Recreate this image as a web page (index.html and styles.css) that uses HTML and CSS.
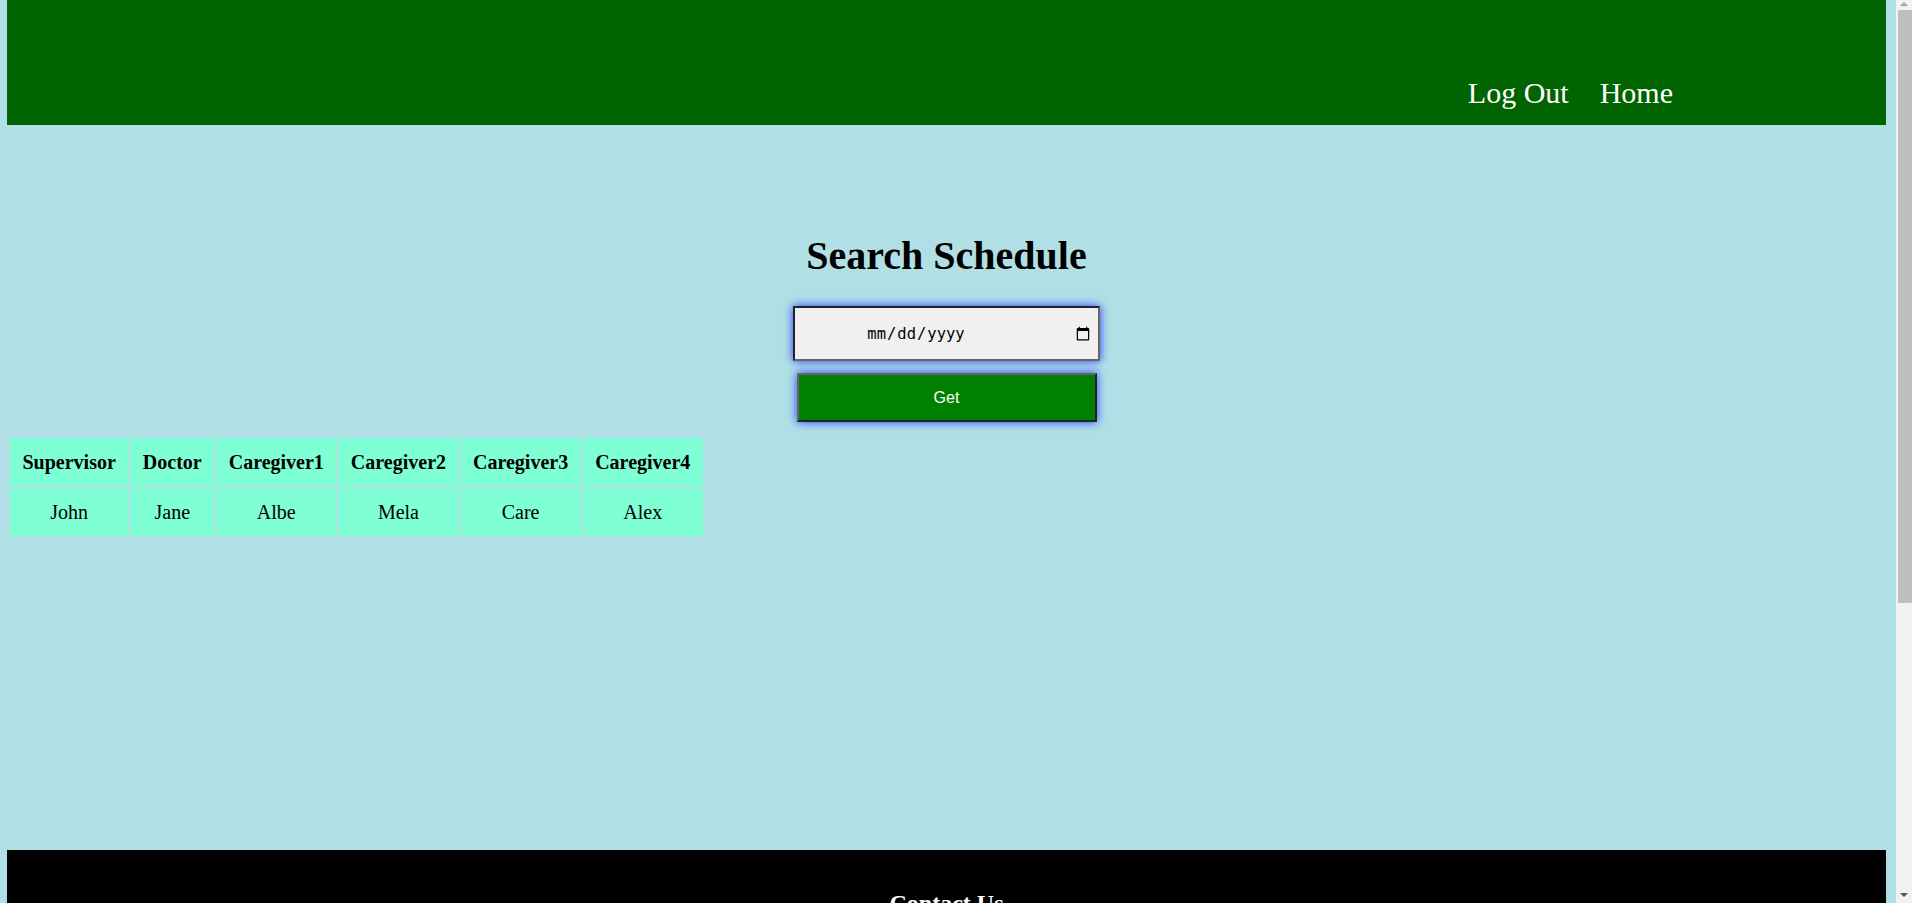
FILE: index.html
```html
<!DOCTYPE html>
<html lang="en">
<head>
<meta charset="utf-8">
<title>Search Schedule</title>
<link rel="stylesheet" href="styles.css">
</head>
<body>
<header class="site-header">
  <nav class="nav">
    <a class="nav-link" href="#">Log Out</a>
    <a class="nav-link" href="#">Home</a>
  </nav>
</header>
<main class="main">
  <h1 class="title">Search Schedule</h1>
  <form class="search-form">
    <input class="date-input" type="date">
    <button class="get-btn" type="button">Get</button>
  </form>
  <table class="schedule">
    <thead>
      <tr>
        <th>Supervisor</th>
        <th>Doctor</th>
        <th>Caregiver1</th>
        <th>Caregiver2</th>
        <th>Caregiver3</th>
        <th>Caregiver4</th>
      </tr>
    </thead>
    <tbody>
      <tr>
        <td>John</td>
        <td>Jane</td>
        <td>Albe</td>
        <td>Mela</td>
        <td>Care</td>
        <td>Alex</td>
      </tr>
    </tbody>
  </table>
</main>
<footer class="site-footer">
  <h2 class="footer-title">Contact Us</h2>
</footer>
<div class="fake-scrollbar" aria-hidden="true">
  <span class="sb-arrow sb-up"></span>
  <span class="sb-thumb"></span>
  <span class="sb-arrow sb-down"></span>
</div>
</body>
</html>
```
FILE: styles.css
```css
html {
  background: #b0e0e6;
}
body {
  margin: 0 26px 0 7px;
  background: #b0e0e6;
  font-family: "Liberation Serif", "Times New Roman", serif;
  color: #000;
}
.site-header {
  height: 125px;
  background: #006400;
  display: flex;
  align-items: flex-end;
  justify-content: flex-end;
  box-sizing: border-box;
  padding: 0 213px 15px 0;
}
.nav {
  display: flex;
  gap: 31px;
}
.nav-link {
  color: #fff;
  text-decoration: none;
  font-size: 30px;
  line-height: 34px;
}
.main {
  box-sizing: border-box;
  min-height: 725px;
  padding-top: 108px;
}
.title {
  margin: 0 0 27px;
  text-align: center;
  font-size: 40px;
  font-weight: bold;
  line-height: 46px;
}
.search-form {
  display: flex;
  flex-direction: column;
  align-items: center;
  gap: 12px;
  margin: 0 0 14px;
}
.date-input {
  box-sizing: border-box;
  width: 307px;
  height: 55px;
  border: 2px solid;
  border-color: #222 #666 #666 #222;
  background: #f0f0f0;
  box-shadow: 0 0 9px #2635ff;
  font-family: "DejaVu Sans Mono", monospace;
  font-size: 15.5px;
  text-align: center;
  padding: 0 7px 0 4px;
  color: #000;
}
.date-input::-webkit-calendar-picker-indicator {
  margin-left: 42px;
  width: 16px;
  height: 16px;
  padding: 0;
}
.get-btn {
  box-sizing: border-box;
  width: 300px;
  height: 49px;
  border: 2px solid;
  border-color: #666 #222 #222 #666;
  background: #008000;
  color: #fff;
  font-family: "Liberation Sans", Arial, sans-serif;
  font-size: 16px;
  box-shadow: 0 0 9px #2635ff;
  cursor: pointer;
}
.schedule {
  border-collapse: separate;
  border-spacing: 2px;
  margin-left: 1px;
}
.schedule th,
.schedule td {
  background: #7fffd4;
  padding: 13px 12.5px 12px;
  font-size: 20px;
  text-align: center;
  line-height: 23px;
}
.schedule th {
  font-weight: bold;
}
.schedule td {
  font-weight: normal;
}
.site-footer {
  background: #000;
  color: #fff;
  min-height: 480px;
  padding-top: 39px;
  box-sizing: border-box;
}
.footer-title {
  margin: 0;
  text-align: center;
  font-size: 24px;
  font-weight: bold;
  line-height: 28px;
}
.fake-scrollbar {
  position: fixed;
  top: 0;
  right: 0;
  width: 16px;
  height: 100vh;
  background: #f1f1f1;
}
.sb-thumb {
  position: absolute;
  top: 10px;
  left: 2px;
  right: 0;
  height: 593px;
  background: #bebebe;
}
.sb-arrow {
  position: absolute;
  left: 4px;
  width: 0;
  height: 0;
  border-left: 4px solid transparent;
  border-right: 4px solid transparent;
}
.sb-up {
  top: 2px;
  border-bottom: 4px solid #a3a3a3;
}
.sb-down {
  bottom: 6px;
  border-top: 4px solid #505050;
}
```
